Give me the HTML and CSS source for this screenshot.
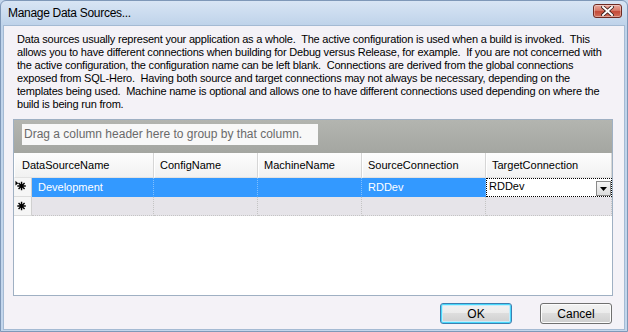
FILE: index.html
```html
<!DOCTYPE html>
<html>
<head>
<meta charset="utf-8">
<link rel="stylesheet" href="styles.css">
</head>
<body>
<div class="window">
  <div class="titlebar">
    <span class="title">Manage Data Sources...</span>
    <button class="close" aria-label="Close">
      <svg width="13" height="10" viewBox="0 0 13 10">
        <path d="M2 1 L11 9 M11 1 L2 9" stroke="#3b1f1c" stroke-width="3.6" stroke-linecap="square"/>
        <path d="M2 1 L11 9 M11 1 L2 9" stroke="#ffffff" stroke-width="2" stroke-linecap="square"/>
      </svg>
    </button>
  </div>
  <div class="client">
    <p class="desc">Data sources usually represent your application as a whole.&nbsp; The active configuration is used when a build is invoked.&nbsp; This<br>allows you to have different connections when building for Debug versus Release, for example.&nbsp; If you are not concerned with<br>the active configuration, the configuration name can be left blank.&nbsp; Connections are derived from the global connections<br>exposed from SQL-Hero.&nbsp; Having both source and target connections may not always be necessary, depending on the<br>templates being used.&nbsp; Machine name is optional and allows one to have different connections used depending on where the<br>build is being run from.</p>
    <div class="grid">
      <div class="group-panel"><div class="group-box">Drag a column header here to group by that column.</div></div>
      <div class="table">
        <div class="hcell first">DataSourceName</div>
        <div class="hcell">ConfigName</div>
        <div class="hcell">MachineName</div>
        <div class="hcell">SourceConnection</div>
        <div class="hcell">TargetConnection</div>

        <div class="ind">
          <svg width="18" height="18" viewBox="0 0 18 18">
            <path d="M1.5 2.5 L1.5 7.5 L4.5 5 Z" fill="#000"/>
            <path d="M8 3.5 V12.5 M3.5 8 H12.5 M4.8 4.8 L11.2 11.2 M11.2 4.8 L4.8 11.2" stroke="#000" stroke-width="1.5"/>
          </svg>
        </div>
        <div class="cell sel">Development</div>
        <div class="cell sel"></div>
        <div class="cell sel"></div>
        <div class="cell sel">RDDev</div>
        <div class="cell edit"><span class="edit-text">RDDev</span><span class="drop"><svg width="7" height="4" viewBox="0 0 7 4"><path d="M0 0 H7 L3.5 4 Z" fill="#000"/></svg></span></div>

        <div class="ind">
          <svg width="18" height="18" viewBox="0 0 18 18">
            <path d="M8 4.5 V13.5 M3.5 9 H12.5 M4.8 5.8 L11.2 12.2 M11.2 5.8 L4.8 12.2" stroke="#000" stroke-width="1.5"/>
          </svg>
        </div>
        <div class="cell new"></div>
        <div class="cell new"></div>
        <div class="cell new"></div>
        <div class="cell new"></div>
        <div class="cell new"></div>
      </div>
      <div class="empty"></div>
    </div>
    <div class="buttons">
      <button class="btn ok">OK</button>
      <button class="btn">Cancel</button>
    </div>
  </div>
</div>
</body>
</html>
```

FILE: styles.css
```css
html, body {
  margin: 0;
  padding: 0;
}
body {
  width: 628px;
  height: 332px;
  overflow: hidden;
  font-family: "Liberation Sans", Arial, sans-serif;
  background: #c3d6ec;
}
.window {
  box-sizing: border-box;
  width: 628px;
  height: 332px;
  border: 1px solid #7f98b8;
  border-radius: 6px 6px 0 0;
  background: linear-gradient(#d8e5f4 0, #bfd3ea 24px, #c3d6ec 100%);
  display: flex;
  flex-direction: column;
}
.titlebar {
  height: 24px;
  flex: none;
  display: flex;
  justify-content: space-between;
  align-items: flex-start;
  padding: 0 5px 0 7px;
}
.title {
  font-size: 12px;
  letter-spacing: -0.3px;
  line-height: 24px;
  color: #000;
}
.close {
  margin-top: 3px;
  width: 29px;
  height: 14px;
  padding: 0;
  border: 1px solid #6e2a22;
  border-radius: 3px;
  background: linear-gradient(#e9a99d 0, #d87a6a 45%, #c44a38 55%, #d2705c 100%);
  box-shadow: inset 0 0 0 1px rgba(255,255,255,0.35);
  display: flex;
  align-items: center;
  justify-content: center;
}
.client {
  flex: 1;
  margin: 0 2px 1px 2px;
  border: 1px solid #a4bad3;
  background: #f4f2f7;
  display: flex;
  flex-direction: column;
  padding: 7px 11px 5px 9px;
}
.desc {
  margin: 0;
  padding-left: 4px;
  font-size: 11px;
  line-height: 13px;
  letter-spacing: -0.2px;
  white-space: nowrap;
  color: #000;
}
.grid {
  margin-top: 8px;
  flex: 1;
  border: 1px solid #9fb0c3;
  background: #ffffff;
  display: flex;
  flex-direction: column;
}
.group-panel {
  height: 33px;
  flex: none;
  box-sizing: border-box;
  padding: 4px 0 0 8px;
  background: linear-gradient(#b3b5b0, #a4a6a1);
}
.group-box {
  width: 296px;
  height: 21px;
  box-sizing: border-box;
  background: #f8f8f8;
  color: #6a6a6a;
  font-size: 12px;
  line-height: 21px;
  padding-left: 2px;
  white-space: nowrap;
}
.table {
  display: grid;
  grid-template-columns: 18px 122px 104px 104px 124px 126px;
  grid-template-rows: 25px 19px 19px;
  font-size: 11px;
}
.hcell {
  box-sizing: border-box;
  background: linear-gradient(#fdfdfd, #f1f1f1);
  border-right: 1px solid #d6d6d6;
  border-left: 1px solid #ffffff;
  border-bottom: 1px solid #e2e2e2;
  padding-left: 5px;
  line-height: 24px;
  color: #000;
  white-space: nowrap;
}
.hcell.first {
  grid-column: span 2;
  padding-left: 7px;
}
.ind {
  box-sizing: border-box;
  background: #f6f6f6;
  border-right: 1px solid #d0d0d0;
  border-bottom: 1px solid #dcdcdc;
  display: flex;
}
.cell {
  box-sizing: border-box;
  border-right: 1px dotted #c4c4c4;
  border-bottom: 1px dotted #c4c4c4;
  padding-left: 6px;
  line-height: 18px;
  white-space: nowrap;
}
.cell.sel {
  background: #3399ff;
  color: #ffffff;
  border-right-color: #7fbfff;
  border-bottom-color: #3399ff;
}
.cell.new {
  background: #e6e4e9;
}
.cell.edit {
  background: #ffffff;
  border: 1px dotted #000;
  padding-left: 2px;
  display: flex;
  justify-content: space-between;
  align-items: center;
  line-height: 15px;
}
.edit-text {
  align-self: flex-start;
  color: #000;
}
.drop {
  box-sizing: border-box;
  width: 15px;
  height: 15px;
  margin-top: 2px;
  border: 1px solid #8a8a8a;
  background: linear-gradient(#f6f6f6, #dcdcdc);
  display: flex;
  align-items: center;
  justify-content: center;
}
.empty {
  flex: 1;
}
.buttons {
  flex: none;
  margin-top: 7px;
  display: flex;
  justify-content: flex-end;
  gap: 28px;
  padding-right: 1px;
}
.btn {
  box-sizing: border-box;
  width: 72px;
  height: 21px;
  padding: 0;
  border: 1px solid #707070;
  border-radius: 3px;
  background: linear-gradient(#f2f2f2 0, #ebebeb 50%, #dddddd 50%, #cfcfcf 100%);
  box-shadow: inset 0 0 0 1px #fcfcfc;
  font-family: "Liberation Sans", Arial, sans-serif;
  font-size: 12px;
  color: #000;
}
.btn.ok {
  border-color: #3c7fb1;
  box-shadow: inset 0 0 0 1px #48d8fb, inset 0 0 0 2px #c5ecfb;
}
```
